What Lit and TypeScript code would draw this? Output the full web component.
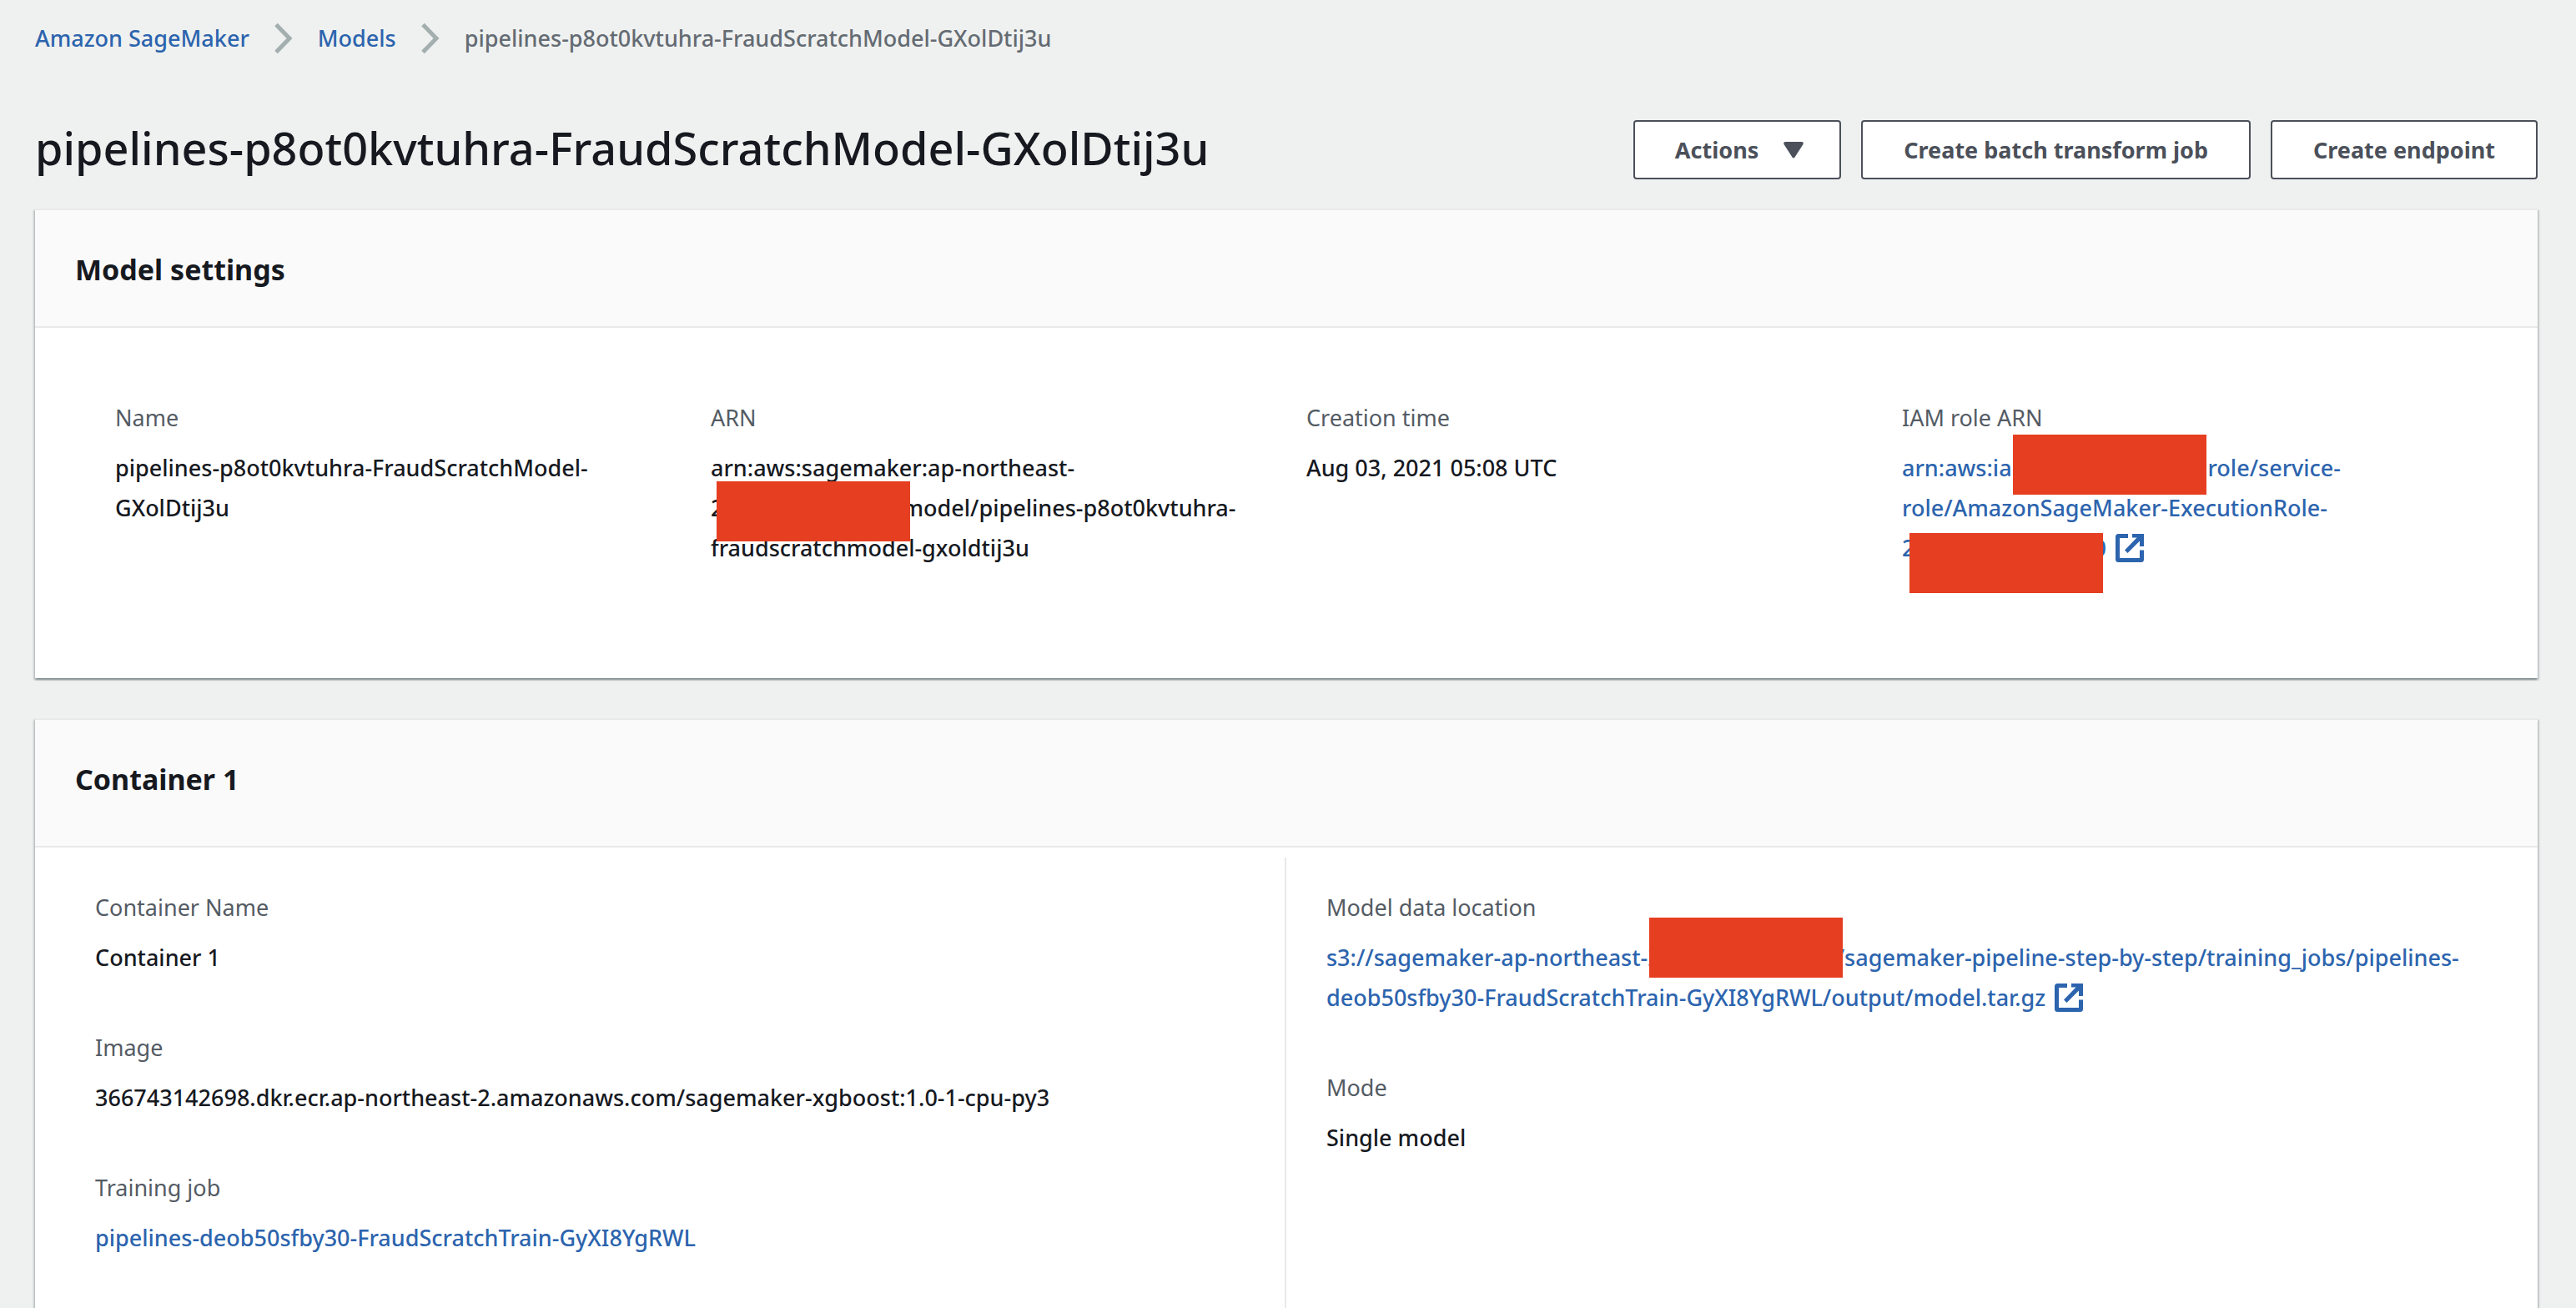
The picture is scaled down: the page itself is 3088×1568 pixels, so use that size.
import { LitElement, html, css, svg, nothing, TemplateResult } from "lit";
import { customElement, property } from "lit/decorators.js";

const externalIcon = html`<svg class="external" viewBox="0 0 34 34" width="34" height="34" fill="none" aria-hidden="true">
  ${svg`<path d="M15 2.5H3.5Q2.5 2.5 2.5 3.5V30.5Q2.5 31.5 3.5 31.5H30.5Q31.5 31.5 31.5 30.5V19.5" stroke="currentColor" stroke-width="5" />
  <path d="M20 0H34V15H29V8.500L14.500 23L11 19.500L25.500 4.500H20Z" fill="currentColor" />`}
</svg>`;

const chevron = html`<svg class="chevron" viewBox="0 0 22 38" width="22" height="38" fill="none" aria-hidden="true">
  ${svg`<path d="M2 2.500L18 19L2 35.500" stroke="#a3afae" stroke-width="5" />`}
</svg>`;

interface Field {
  label: string;
  value: TemplateResult | string;
}

/** A titled panel with a shaded heading strip. */
@customElement("info-card")
export class InfoCard extends LitElement {
  @property() heading = "";
  @property({ type: Boolean, reflect: true }) tall = false;

  static styles = css`
    :host {
      display: block;
      background: #fff;
      border-top: 2px solid #e8eae9;
      box-shadow: 0 2px 2px 0 rgba(0, 28, 36, 0.3), 2px 2px 2px 0 rgba(0, 28, 36, 0.15),
        -2px 2px 2px 0 rgba(0, 28, 36, 0.15);
    }
    .head {
      padding: 48px 48px 45px;
      background: #fafafa;
      border-bottom: 2px solid #e8eae9;
    }
    :host([tall]) .head {
      padding-bottom: 57px;
    }
    .heading {
      margin: 0;
      font-size: 34px;
      line-height: 46px;
      font-weight: 700;
    }
  `;

  render() {
    return html`<header class="head"><h2 class="heading">${this.heading}</h2></header>
      <slot></slot>`;
  }
}

@customElement("app-root")
export class AppRoot extends LitElement {
  static styles = css`
    :host {
      display: block;
      box-sizing: border-box;
      height: 100vh;
      overflow: hidden;
      padding: 22px 46px 0 42px;
      background: #eff1f0;
      color: #16191f;
      font-family: "Noto Sans", "Open Sans", sans-serif;
      font-size: 27px;
      line-height: 48px;
      font-weight: 500;
    }
    a {
      color: #2c64ae;
      text-decoration: none;
    }
    .crumbs {
      display: flex;
      align-items: center;
      gap: 30px;
      margin: 0;
      padding: 0;
      list-style: none;
    }
    .crumb {
      display: flex;
      align-items: center;
      gap: 30px;
    }
    .crumb.current {
      color: #646b73;
    }
    .titlebar {
      display: flex;
      justify-content: space-between;
      align-items: flex-start;
      margin: 74px 0 35px;
    }
    .title {
      margin: 0;
      font-size: 54px;
      line-height: 66px;
      font-weight: 500;
    }
    .actions {
      display: flex;
      gap: 24px;
    }
    .button {
      display: flex;
      align-items: center;
      gap: 30px;
      box-sizing: border-box;
      height: 71px;
      margin: 0;
      padding: 0 49px;
      border: 2px solid #4b505a;
      border-radius: 4px;
      background: #fff;
      color: #4b505a;
      font-family: inherit;
      font-size: 27px;
      font-weight: 700;
      white-space: nowrap;
    }
    .button.menu {
      padding: 0 43px 0 48px;
    }
    .card {
      margin-bottom: 48px;
    }
    .grid {
      display: grid;
      grid-template-columns: repeat(4, 1fr);
      padding: 84px 72px 72px;
    }
    .grid .field {
      padding: 0 24px;
    }
    .halves {
      display: grid;
      grid-template-columns: 1fr 1fr;
      padding: 12px 0;
    }
    .half {
      padding: 36px 48px;
    }
    .half.first {
      padding-left: 72px;
      border-right: 2px solid #e8eae9;
    }
    .fields {
      margin: 0;
    }
    .field {
      margin-bottom: 60px;
    }
    .label {
      margin-bottom: 12px;
      color: #545b64;
      font-weight: 400;
    }
    .value {
      position: relative;
      margin: 0;
    }
    .external {
      margin-left: 4px;
      vertical-align: -7px;
    }
    .blank {
      display: inline-block;
      width: 214px;
    }
    .blank.medium {
      width: 210px;
    }
    .blank.short {
      width: 202px;
    }
    .cover {
      position: absolute;
      width: 232px;
      height: 72px;
      background: #e63e20;
    }
    .cover.account {
      left: 7px;
      top: 40px;
    }
    .cover.role {
      left: 133px;
      top: -16px;
    }
    .cover.suffix {
      left: 9px;
      top: 102px;
    }
    .cover.bucket {
      left: 387px;
      top: -24px;
    }
  `;

  private readonly modelName = "pipelines-p8ot0kvtuhra-FraudScratchModel-GXolDtij3u";

  private readonly settings: Field[] = [
    { label: "Name", value: html`pipelines-p8ot0kvtuhra-FraudScratchModel-<br />GXolDtij3u` },
    {
      label: "ARN",
      value: html`arn:aws:sagemaker:ap-northeast-<br />2<span class="blank"></span>model/pipelines-p8ot0kvtuhra-<br />fraudscratchmodel-gxoldtij3u<span class="cover account"></span>`,
    },
    { label: "Creation time", value: "Aug 03, 2021 05:08 UTC" },
    {
      label: "IAM role ARN",
      value: html`<a href="#role">arn:aws:iam<span class="blank short"></span>:role/service-<br />role/AmazonSageMaker-ExecutionRole-<br />2<span class="blank"></span>0 ${externalIcon}</a><span class="cover role"></span><span class="cover suffix"></span>`,
    },
  ];

  private readonly containerLeft: Field[] = [
    { label: "Container Name", value: "Container 1" },
    { label: "Image", value: "366743142698.dkr.ecr.ap-northeast-2.amazonaws.com/sagemaker-xgboost:1.0-1-cpu-py3" },
    {
      label: "Training job",
      value: html`<a href="#training-job">pipelines-deob50sfby30-FraudScratchTrain-GyXI8YgRWL</a>`,
    },
  ];

  private readonly containerRight: Field[] = [
    {
      label: "Model data location",
      value: html`<a href="#model-data">s3://sagemaker-ap-northeast-2<span class="blank medium"></span>/sagemaker-pipeline-step-by-step/training_jobs/pipelines-<br />deob50sfby30-FraudScratchTrain-GyXI8YgRWL/output/model.tar.gz ${externalIcon}</a><span class="cover bucket"></span>`,
    },
    { label: "Mode", value: "Single model" },
  ];

  private fields(list: Field[], extra: string) {
    return html`<dl class="fields ${extra}">
      ${list.map(
        (f) => html`<div class="field">
          <dt class="label">${f.label}</dt>
          <dd class="value">${f.value}</dd>
        </div>`
      )}
    </dl>`;
  }

  private crumb(text: string, href?: string) {
    return html`<li class="crumb ${href ? "" : "current"}">
      ${href ? html`<a href=${href}>${text}</a>` : text}${href ? chevron : nothing}
    </li>`;
  }

  render() {
    return html`
      <nav aria-label="Breadcrumb">
        <ol class="crumbs">
          ${this.crumb("Amazon SageMaker", "#sagemaker")} ${this.crumb("Models", "#models")}
          ${this.crumb(this.modelName)}
        </ol>
      </nav>
      <div class="titlebar">
        <h1 class="title">${this.modelName}</h1>
        <div class="actions">
          <button class="button menu" type="button">
            Actions
            <svg viewBox="0 0 24 20" width="24" height="20" aria-hidden="true">
              <path d="M2 0H22Q24.500 0.500 23.500 3L13.500 18.500Q12 20.500 10.500 18.500L0.500 3Q-0.500 0.500 2 0Z" fill="currentColor" />
            </svg>
          </button>
          <button class="button" type="button">Create batch transform job</button>
          <button class="button" type="button">Create endpoint</button>
        </div>
      </div>
      <info-card class="card" heading="Model settings">${this.fields(this.settings, "grid")}</info-card>
      <info-card class="card" heading="Container 1" tall>
        <div class="halves">
          <div class="half first">${this.fields(this.containerLeft, "")}</div>
          <div class="half">${this.fields(this.containerRight, "")}</div>
        </div>
      </info-card>
    `;
  }
}
